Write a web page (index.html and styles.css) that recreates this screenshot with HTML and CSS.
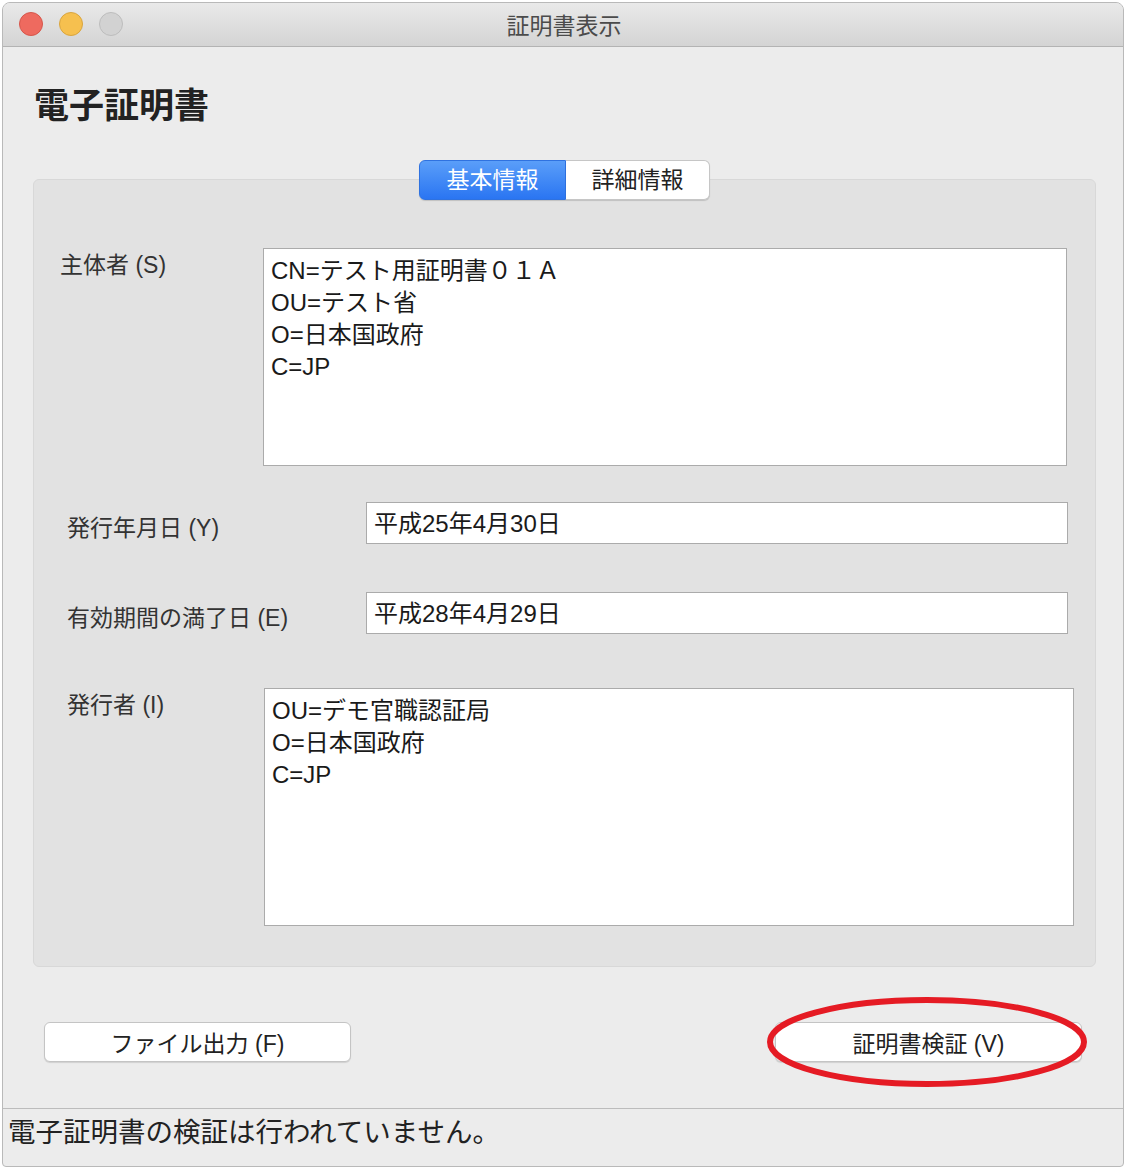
FILE: index.html
```html
<!DOCTYPE html>
<html lang="ja">
<head>
    <meta charset="UTF-8">
    <meta name="viewport" content="width=device-width, initial-scale=1.0">
    <title>証明書表示</title>
    <link rel="stylesheet" href="styles.css">
</head>
<body>
    <div class="window">
        <div class="titlebar">
            <div class="lights">
                <span class="light red"></span>
                <span class="light yellow"></span>
                <span class="light gray"></span>
            </div>
            <div class="title">証明書表示</div>
            <div></div>
        </div>

        <div class="content">
            <h1 class="heading">電子証明書</h1>

            <div class="tabs">
                <div class="tab active">基本情報</div>
                <div class="tab">詳細情報</div>
            </div>

            <div class="panel">
                <div class="row row-subject">
                    <div class="label">主体者 (S)</div>
                    <div class="field area subject">CN=テスト用証明書０１Ａ<br>OU=テスト省<br>O=日本国政府<br>C=JP</div>
                </div>
                <div class="row row-date">
                    <div class="label">発行年月日 (Y)</div>
                    <div class="field line">平成25年4月30日</div>
                </div>
                <div class="row row-expire">
                    <div class="label">有効期間の満了日 (E)</div>
                    <div class="field line">平成28年4月29日</div>
                </div>
                <div class="row row-issuer">
                    <div class="label">発行者 (I)</div>
                    <div class="field area issuer">OU=デモ官職認証局<br>O=日本国政府<br>C=JP</div>
                </div>
            </div>

            <div class="actions">
                <button class="btn">ファイル出力 (F)</button>
                <div class="mark-wrap">
                    <button class="btn">証明書検証 (V)</button>
                    <svg class="mark" viewBox="0 0 320 92" preserveAspectRatio="none">
                        <ellipse cx="160" cy="46" rx="157" ry="42" fill="none" stroke="#e51b24" stroke-width="6"/>
                    </svg>
                </div>
            </div>
        </div>

        <div class="status">電子証明書の検証は行われていません。</div>
    </div>
</body>
</html>
```

FILE: styles.css
```css
body {
    margin: 0;
    background-color: #ffffff;
    font-family: "Liberation Sans", "Noto Sans CJK JP", sans-serif;
    color: #222;
}

.window {
    margin: 2px 0 0 2px;
    width: 1120px;
    height: 1163px;
    border: 1px solid #b9b9b9;
    border-radius: 8px 8px 4px 4px;
    background-color: #ececec;
    display: flex;
    flex-direction: column;
    overflow: hidden;
}

.titlebar {
    height: 43px;
    flex: none;
    display: grid;
    grid-template-columns: 1fr auto 1fr;
    align-items: center;
    background: linear-gradient(#e9e9e9, #d4d4d4);
    border-bottom: 1px solid #b3b3b3;
}

.lights {
    display: flex;
    gap: 16px;
    padding-left: 16px;
    margin-top: -1px;
}

.light {
    width: 22px;
    height: 22px;
    border-radius: 50%;
    border: 1px solid;
}

.light.red {
    background-color: #ee6a5f;
    border-color: #d6564b;
}

.light.yellow {
    background-color: #f6c04f;
    border-color: #d9a53f;
}

.light.gray {
    background-color: #d2d2d2;
    border-color: #bdbdbd;
}

.title {
    font-size: 23px;
    color: #4b4b4b;
    line-height: 30px;
    margin-left: 2px;
    margin-top: 2px;
}

.content {
    flex: 1;
    padding-top: 39px;
}

.heading {
    margin: 0 0 34px 31px;
    font-size: 35px;
    line-height: 40px;
    font-weight: bold;
    color: #222;
}

/* Pestañas sobre el panel */
.tabs {
    position: relative;
    z-index: 1;
    display: flex;
    justify-content: center;
    margin: 0 27px -21px 30px;
}

.tab {
    width: 143px;
    height: 38px;
    line-height: 38px;
    text-align: center;
    font-size: 23px;
    background-color: #fff;
    border: 1px solid #c6c6c6;
    border-left: none;
    border-radius: 0 6px 6px 0;
    box-shadow: 0 1px 1px rgba(0, 0, 0, 0.15);
    color: #222;
}

.tab.active {
    width: 145px;
    color: #fff;
    background: linear-gradient(#5a9ef9, #2a75f2);
    border: 1px solid #2f72e0;
    border-radius: 6px 0 0 6px;
}

.panel {
    margin: 0 27px 0 30px;
    height: 746px;
    padding: 40px 0 0;
    background-color: #e2e2e2;
    border: 1px solid #d8d8d8;
    border-radius: 6px;
}

.row {
    display: flex;
    align-items: flex-start;
}

.label {
    font-size: 23px;
    line-height: 32px;
    color: #333;
}

.field {
    background-color: #fff;
    border: 1px solid #ababab;
    font-size: 24px;
    color: #1a1a1a;
    box-sizing: border-box;
    padding-left: 7px;
}

.area {
    line-height: 32px;
    padding-top: 6px;
}

.row-subject {
    margin-top: 28px;
}

.row-subject .label {
    width: 203px;
    padding-left: 26px;
    margin-top: 1px;
}

.subject {
    width: 804px;
    height: 218px;
}

.row-date {
    margin-top: 36px;
    align-items: center;
}

.row-expire {
    margin-top: 48px;
    align-items: center;
}

.row-date .label,
.row-expire .label {
    width: 299px;
    padding-left: 33px;
    margin-top: 10px;
}

.line {
    width: 702px;
    height: 42px;
    line-height: 41px;
}

.row-issuer {
    margin-top: 54px;
}

.row-issuer .label {
    width: 197px;
    padding-left: 33px;
    margin-top: 1px;
}

.issuer {
    width: 810px;
    height: 238px;
}

.actions {
    display: flex;
    justify-content: space-between;
    margin: 55px 41px 0 41px;
}

.btn {
    width: 307px;
    height: 40px;
    font-family: inherit;
    font-size: 23px;
    color: #222;
    background-color: #fff;
    border: 1px solid #c4c4c4;
    border-radius: 6px;
    box-shadow: 0 1px 1px rgba(0, 0, 0, 0.12);
    padding: 0;
}

.mark-wrap {
    position: relative;
}

.mark {
    position: absolute;
    left: -8px;
    right: -5px;
    top: -26px;
    width: 320px;
    height: 92px;
}

.status {
    flex: none;
    height: 58px;
    box-sizing: border-box;
    border-top: 1px solid #bcbcbc;
    padding: 7px 0 0 5px;
    font-size: 27.5px;
    line-height: 34px;
    color: #222;
}
```
